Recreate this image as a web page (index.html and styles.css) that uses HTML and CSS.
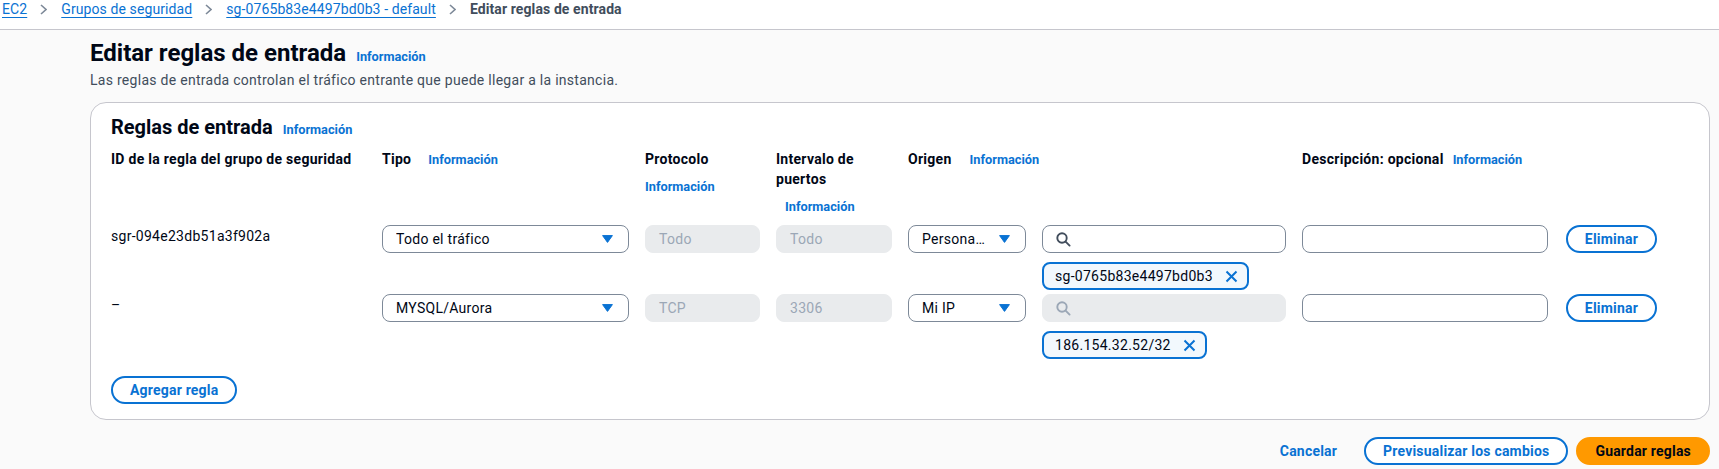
FILE: index.html
```html
<!DOCTYPE html>
<html lang="es">
<head>
<meta charset="utf-8">
<title>Editar reglas de entrada</title>
<link rel="stylesheet" href="styles.css">
</head>
<body>
<nav class="breadcrumbs">
  <a class="crumb-link" href="#">EC2</a>
  <svg class="crumb-sep" width="7" height="11" viewBox="0 0 7 11"><polyline points="1,1 6,5.5 1,10" fill="none" stroke="#7d8998" stroke-width="1.6"/></svg>
  <a class="crumb-link" href="#">Grupos de seguridad</a>
  <svg class="crumb-sep" width="7" height="11" viewBox="0 0 7 11"><polyline points="1,1 6,5.5 1,10" fill="none" stroke="#7d8998" stroke-width="1.6"/></svg>
  <a class="crumb-link" href="#">sg-0765b83e4497bd0b3 - default</a>
  <svg class="crumb-sep" width="7" height="11" viewBox="0 0 7 11"><polyline points="1,1 6,5.5 1,10" fill="none" stroke="#7d8998" stroke-width="1.6"/></svg>
  <span class="crumb-current">Editar reglas de entrada</span>
</nav>

<main class="page">
  <header class="page-header">
    <h1 class="page-title">Editar reglas de entrada<a class="info info--heading" href="#">Información</a></h1>
    <p class="page-desc">Las reglas de entrada controlan el tráfico entrante que puede llegar a la instancia.</p>
  </header>

  <section class="card">
    <h2 class="card-title">Reglas de entrada<a class="info info--heading" href="#">Información</a></h2>

    <div class="rules-head">
      <div class="col-head">ID de la regla del grupo de seguridad</div>
      <div class="col-head col-head--tipo"><span>Tipo</span><a class="info" href="#">Información</a></div>
      <div class="col-head"><span>Protocolo</span><a class="info" href="#">Información</a></div>
      <div class="col-head"><span>Intervalo de puertos</span><a class="info info--indent" href="#">Información</a></div>
      <div class="col-head col-head--origen col-head--span"><span>Origen</span><a class="info" href="#">Información</a></div>
      <div class="col-head col-head--desc"><span>Descripción: opcional</span><a class="info" href="#">Información</a></div>
    </div>

    <div class="rule-row">
      <div class="rule-id">sgr-094e23db51a3f902a</div>
      <div class="select">
        <span class="select-value">Todo el tráfico</span>
        <svg class="caret" width="11" height="8" viewBox="0 0 11 8"><path d="M0.6 0.6h9.8L5.5 7.4z" fill="#0972d3" stroke="#0972d3" stroke-width="1" stroke-linejoin="round"/></svg>
      </div>
      <div class="input input--disabled">Todo</div>
      <div class="input input--disabled">Todo</div>
      <div class="select">
        <span class="select-value">Persona…</span>
        <svg class="caret" width="11" height="8" viewBox="0 0 11 8"><path d="M0.6 0.6h9.8L5.5 7.4z" fill="#0972d3" stroke="#0972d3" stroke-width="1" stroke-linejoin="round"/></svg>
      </div>
      <div class="origin-field">
        <div class="input">
          <svg class="search-icon" width="15" height="15" viewBox="0 0 15 15"><circle cx="6" cy="6" r="4.7" fill="none" stroke="#414d5c" stroke-width="1.9"/><line x1="9.6" y1="9.6" x2="13.6" y2="13.6" stroke="#414d5c" stroke-width="1.9" stroke-linecap="round"/></svg>
        </div>
        <span class="token">sg-0765b83e4497bd0b3<svg class="token-x" width="13" height="13" viewBox="0 0 13 13"><path d="M1.5 1.5L11.5 11.5M11.5 1.5L1.5 11.5" stroke="#0972d3" stroke-width="2" fill="none"/></svg></span>
      </div>
      <div class="input"></div>
      <button class="btn btn--remove" type="button">Eliminar</button>
    </div>

    <div class="rule-row">
      <div class="rule-id">–</div>
      <div class="select">
        <span class="select-value">MYSQL/Aurora</span>
        <svg class="caret" width="11" height="8" viewBox="0 0 11 8"><path d="M0.6 0.6h9.8L5.5 7.4z" fill="#0972d3" stroke="#0972d3" stroke-width="1" stroke-linejoin="round"/></svg>
      </div>
      <div class="input input--disabled">TCP</div>
      <div class="input input--disabled">3306</div>
      <div class="select">
        <span class="select-value">Mi IP</span>
        <svg class="caret" width="11" height="8" viewBox="0 0 11 8"><path d="M0.6 0.6h9.8L5.5 7.4z" fill="#0972d3" stroke="#0972d3" stroke-width="1" stroke-linejoin="round"/></svg>
      </div>
      <div class="origin-field">
        <div class="input input--disabled">
          <svg class="search-icon" width="15" height="15" viewBox="0 0 15 15"><circle cx="6" cy="6" r="4.7" fill="none" stroke="#9ba7b6" stroke-width="1.9"/><line x1="9.6" y1="9.6" x2="13.6" y2="13.6" stroke="#9ba7b6" stroke-width="1.9" stroke-linecap="round"/></svg>
        </div>
        <span class="token">186.154.32.52/32<svg class="token-x" width="13" height="13" viewBox="0 0 13 13"><path d="M1.5 1.5L11.5 11.5M11.5 1.5L1.5 11.5" stroke="#0972d3" stroke-width="2" fill="none"/></svg></span>
      </div>
      <div class="input"></div>
      <button class="btn btn--remove" type="button">Eliminar</button>
    </div>

    <button class="btn btn--add" type="button">Agregar regla</button>
  </section>

  <div class="actions">
    <button class="btn btn--link" type="button">Cancelar</button>
    <button class="btn" type="button">Previsualizar los cambios</button>
    <button class="btn btn--primary" type="button">Guardar reglas</button>
  </div>
</main>
</body>
</html>
```

FILE: styles.css
```css
* {
  box-sizing: border-box;
}

body {
  margin: 0;
  font-family: Roboto, "Noto Sans", Arial, sans-serif;
  font-size: 14px;
  line-height: 20px;
  letter-spacing: 0.28px;
  color: #000716;
  background: #fafafa;
}

/* Breadcrumbs */
.breadcrumbs {
  display: flex;
  align-items: flex-start;
  height: 30px;
  padding-left: 2px;
  background: #ffffff;
  border-bottom: 1px solid #c6c6cd;
  line-height: 18px;
  letter-spacing: 0.1px;
}

.crumb-link {
  color: #0972d3;
  text-decoration: underline;
  text-underline-offset: 3px;
  text-decoration-thickness: 1px;
}

.crumb-sep {
  display: block;
  margin: 4px 14px 0 13px;
  flex: none;
}

.crumb-current {
  font-weight: 700;
  color: #414d5c;
}

/* Page */
.page {
  padding: 0 9px 0 90px;
}

.page-title {
  margin: 8px 0 0;
  font-size: 24px;
  line-height: 30px;
  font-weight: 700;
  letter-spacing: 0;
}

.page-desc {
  margin: 2px 0 0;
  color: #414d5c;
}

.info {
  color: #0972d3;
  font-weight: 700;
  font-size: 12.75px;
  line-height: 16px;
  letter-spacing: 0;
  text-decoration: none;
}

.info--heading {
  margin-left: 10px;
}

.info--indent {
  margin-left: 9px;
}

/* Card */
.card {
  margin-top: 12px;
  background: #ffffff;
  border: 1px solid #c6c6cd;
  border-radius: 16px;
  padding: 12px 20px 15px;
}

.card-title {
  margin: 0;
  font-size: 20px;
  line-height: 24px;
  font-weight: 700;
  letter-spacing: 0;
}

.rules-head,
.rule-row {
  display: grid;
  grid-template-columns: 255px 247px 115px 116px 118px 244px 246px 93px;
  column-gap: 16px;
  align-items: start;
}

.rules-head {
  margin: 10px 0 10px;
}

.col-head {
  display: flex;
  flex-wrap: wrap;
  align-items: baseline;
  column-gap: 16px;
  row-gap: 10px;
  font-weight: 700;
}

.col-head--tipo {
  column-gap: 17px;
}

.col-head--origen {
  column-gap: 18px;
}

.col-head--desc {
  column-gap: 9px;
}

.col-head--span {
  grid-column: span 2;
}

.rule-row + .rule-row {
  margin-top: 4px;
}

.rule-id {
  line-height: 20px;
  padding-top: 1px;
}

.select {
  height: 28px;
  border: 1px solid #7d8998;
  border-radius: 8px;
  background: #ffffff;
  display: flex;
  align-items: center;
  justify-content: space-between;
  padding: 0 15px 0 13px;
}

.select-value {
  white-space: nowrap;
  overflow: hidden;
}

.caret {
  display: block;
  flex: none;
}

.input {
  height: 28px;
  border: 1px solid #7d8998;
  border-radius: 8px;
  background: #ffffff;
  display: flex;
  align-items: center;
  padding: 0 13px;
}

.input--disabled {
  background: #e9ebed;
  border-color: #e9ebed;
  color: #9ba7b6;
}

.search-icon {
  display: block;
}

.origin-field {
  display: flex;
  flex-direction: column;
  align-items: flex-start;
  gap: 9px;
}

.origin-field .input {
  align-self: stretch;
}

.token {
  display: inline-flex;
  align-items: center;
  gap: 12px;
  height: 28px;
  padding: 0 9px 0 11px;
  border: 2px solid #0972d3;
  border-radius: 8px;
  background: #f2f8fd;
  color: #000716;
  white-space: nowrap;
}

.token-x {
  display: block;
}

/* Buttons */
.btn {
  height: 28px;
  padding: 0 17px;
  border: 2px solid #0972d3;
  border-radius: 20px;
  background: #ffffff;
  color: #0972d3;
  font-family: inherit;
  font-size: 14px;
  line-height: 20px;
  font-weight: 700;
  letter-spacing: 0.2px;
  white-space: nowrap;
  cursor: pointer;
}

.btn--remove {
  justify-self: end;
}

.btn--add {
  margin-top: 17px;
}

.btn--link {
  border-color: transparent;
  background: transparent;
}

.btn--primary {
  background: #ff9900;
  border-color: #ff9900;
  color: #000716;
}

.actions {
  display: flex;
  justify-content: flex-end;
  gap: 8px;
  margin-top: 17px;
}
```
